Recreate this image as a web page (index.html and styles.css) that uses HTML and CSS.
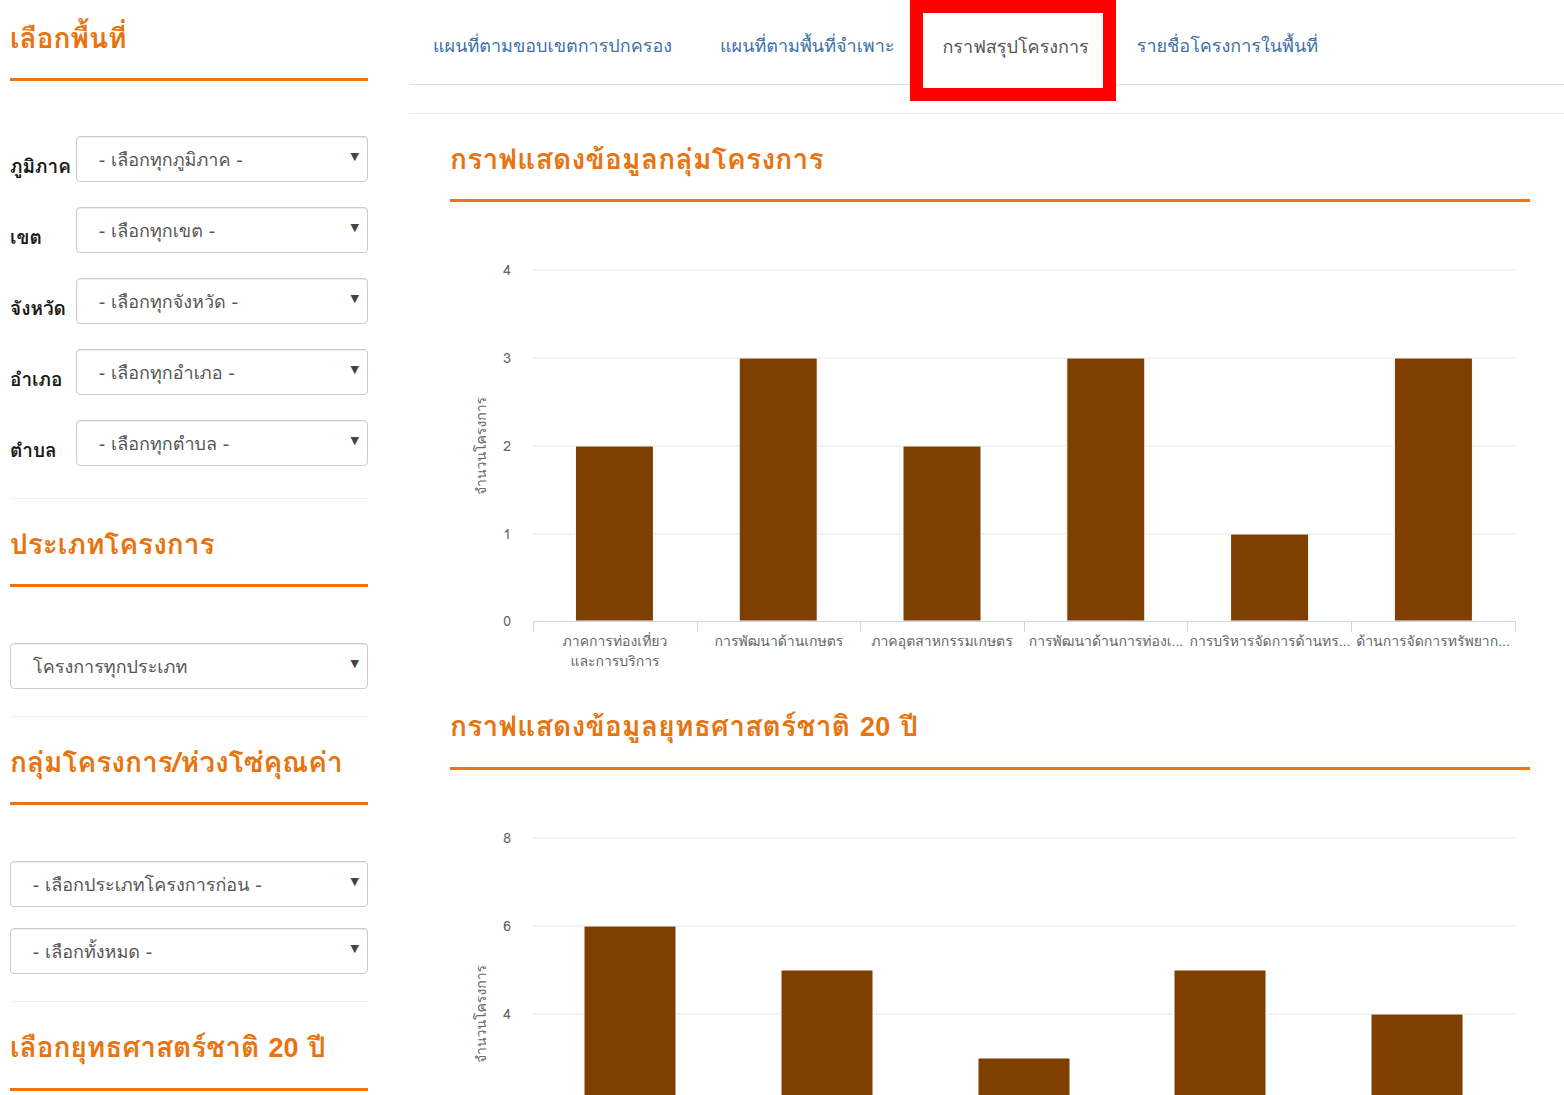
FILE: index.html
```html
<!DOCTYPE html>
<html lang="th">
<head>
<meta charset="utf-8">
<title>กราฟสรุปโครงการ</title>
<link rel="stylesheet" href="styles.css">
</head>
<body>
<div class="page">
  <aside class="sidebar">
    <h2 class="sec-title first">เลือกพื้นที่</h2>
    <div class="form-rows">
      <div class="form-row"><label class="row-label">ภูมิภาค</label><div class="select"><span class="select-text">- เลือกทุกภูมิภาค -</span><span class="caret">▼</span></div></div>
      <div class="form-row"><label class="row-label">เขต</label><div class="select"><span class="select-text">- เลือกทุกเขต -</span><span class="caret">▼</span></div></div>
      <div class="form-row"><label class="row-label">จังหวัด</label><div class="select"><span class="select-text">- เลือกทุกจังหวัด -</span><span class="caret">▼</span></div></div>
      <div class="form-row"><label class="row-label">อำเภอ</label><div class="select"><span class="select-text">- เลือกทุกอำเภอ -</span><span class="caret">▼</span></div></div>
      <div class="form-row"><label class="row-label">ตำบล</label><div class="select"><span class="select-text">- เลือกทุกตำบล -</span><span class="caret">▼</span></div></div>
    </div>
    <hr class="divider">
    <h2 class="sec-title">ประเภทโครงการ</h2>
    <div class="select-stack">
      <div class="select"><span class="select-text">โครงการทุกประเภท</span><span class="caret">▼</span></div>
    </div>
    <hr class="divider">
    <h2 class="sec-title">กลุ่มโครงการ/ห่วงโซ่คุณค่า</h2>
    <div class="select-stack">
      <div class="select"><span class="select-text">- เลือกประเภทโครงการก่อน -</span><span class="caret">▼</span></div>
      <div class="select"><span class="select-text">- เลือกทั้งหมด -</span><span class="caret">▼</span></div>
    </div>
    <hr class="divider">
    <h2 class="sec-title">เลือกยุทธศาสตร์ชาติ <span class="num">20</span> ปี</h2>
  </aside>

  <main class="main">
    <nav class="tabs-wrap">
      <ul class="tabs">
        <li class="tab"><a>แผนที่ตามขอบเขตการปกครอง</a></li>
        <li class="tab"><a>แผนที่ตามพื้นที่จำเพาะ</a></li>
        <li class="tab active"><a>กราฟสรุปโครงการ</a></li>
        <li class="tab"><a>รายชื่อโครงการในพื้นที่</a></li>
      </ul>
      <div class="highlight-box"></div>
    </nav>
    <div class="tab-gap"></div>

    <section class="chart-section">
      <h2 class="sec-title">กราฟแสดงข้อมูลกลุ่มโครงการ</h2>
      <svg class="chart" width="1080" height="479" viewBox="0 0 1080 479">
        <g class="grid">
          <line x1="83" y1="68" x2="1066" y2="68"/>
          <line x1="83" y1="156" x2="1066" y2="156"/>
          <line x1="83" y1="244" x2="1066" y2="244"/>
          <line x1="83" y1="332" x2="1066" y2="332"/>
        </g>
        <g class="ylabels">
          <text x="61" y="73">4</text>
          <text x="61" y="161">3</text>
          <text x="61" y="249">2</text>
          <text x="61" y="337">1</text>
          <text x="61" y="424">0</text>
        </g>
        <text class="ytitle" transform="translate(36 244) rotate(-90)">จำนวนโครงการ</text>
        <g class="bars">
          <rect x="125.4" y="244" width="78" height="175"/>
          <rect x="289.2" y="156" width="78" height="263"/>
          <rect x="453" y="244" width="78" height="175"/>
          <rect x="616.8" y="156" width="78" height="263"/>
          <rect x="780.6" y="332" width="78" height="87"/>
          <rect x="944.4" y="156" width="78" height="263"/>
        </g>
        <g class="axis">
          <line x1="83" y1="419.5" x2="1066" y2="419.5"/>
          <line x1="83.5" y1="419" x2="83.5" y2="430"/>
          <line x1="247.5" y1="419" x2="247.5" y2="430"/>
          <line x1="410.5" y1="419" x2="410.5" y2="430"/>
          <line x1="574.5" y1="419" x2="574.5" y2="430"/>
          <line x1="737.5" y1="419" x2="737.5" y2="430"/>
          <line x1="901.5" y1="419" x2="901.5" y2="430"/>
          <line x1="1065.5" y1="419" x2="1065.5" y2="430"/>
        </g>
        <g class="xlabels">
          <text x="165" y="444">ภาคการท่องเที่ยว</text>
          <text x="165" y="464">และการบริการ</text>
          <text x="329" y="444">การพัฒนาด้านเกษตร</text>
          <text x="492" y="444">ภาคอุตสาหกรรมเกษตร</text>
          <text x="656" y="444">การพัฒนาด้านการท่องเ...</text>
          <text x="820" y="444">การบริหารจัดการด้านทร...</text>
          <text x="983" y="444">ด้านการจัดการทรัพยาก...</text>
        </g>
      </svg>

      <h2 class="sec-title">กราฟแสดงข้อมูลยุทธศาสตร์ชาติ <span class="num">20</span> ปี</h2>
      <svg class="chart" width="1080" height="326" viewBox="0 0 1080 326">
        <g class="grid">
          <line x1="83" y1="68" x2="1066" y2="68"/>
          <line x1="83" y1="156" x2="1066" y2="156"/>
          <line x1="83" y1="244" x2="1066" y2="244"/>
        </g>
        <g class="ylabels">
          <text x="61" y="73">8</text>
          <text x="61" y="161">6</text>
          <text x="61" y="249">4</text>
        </g>
        <text class="ytitle" transform="translate(36 244) rotate(-90)">จำนวนโครงการ</text>
        <g class="bars">
          <rect x="134" y="156" width="92" height="200"/>
          <rect x="331" y="200" width="92" height="156"/>
          <rect x="528" y="288" width="92" height="68"/>
          <rect x="724" y="200" width="92" height="156"/>
          <rect x="921" y="244" width="92" height="112"/>
        </g>
      </svg>
    </section>
  </main>
</div>
</body>
</html>
```

FILE: styles.css
```css
* { box-sizing: border-box; }

html, body {
  margin: 0;
  padding: 0;
  background: #fff;
}

body {
  font-family: Tahoma, Loma, Garuda, Waree, Umpush, "Noto Sans Thai", "Noto Sans", "DejaVu Sans", sans-serif;
  color: #333;
  overflow: hidden;
}

.page {
  display: flex;
  align-items: flex-start;
  padding-left: 10px;
  gap: 42px;
}

/* ---------- sidebar ---------- */
.sidebar {
  width: 358px;
  flex: none;
}

.sec-title {
  margin: 30px 0 0;
  font-size: 28px;
  line-height: 30px;
  font-weight: bold;
  color: #e8740f;
  padding-bottom: 25px;
  border-bottom: 3px solid #ec7512;
  white-space: nowrap;
}

.sec-title .num {
  font-family: "Liberation Sans", Arial, sans-serif;
  font-size: 27px;
}

.sidebar .sec-title.first {
  margin-top: 23px;
}

.form-rows {
  display: flex;
  flex-direction: column;
  gap: 25px;
  margin-top: 55px;
}

.form-row {
  display: flex;
  align-items: flex-end;
}

.form-row .select {
  flex: 1;
}

.row-label {
  width: 66px;
  flex: none;
  font-weight: bold;
  font-size: 19px;
  line-height: 24px;
  color: #1a1a1a;
  padding-bottom: 4px;
  white-space: nowrap;
}

.select {
  height: 46px;
  border: 1px solid #ccc;
  border-radius: 4px;
  box-shadow: inset 0 1px 1px rgba(0,0,0,0.075);
  display: flex;
  align-items: center;
  justify-content: space-between;
  padding: 0 8px 0 22px;
  background: #fff;
}

.select-text {
  font-size: 18px;
  color: #555;
}

.caret {
  font-size: 11px;
  color: #444;
  margin-top: -6px;
}

.divider {
  border: 0;
  border-top: 1px solid #eee;
  margin: 32px 0 0;
}

.select-stack {
  display: flex;
  flex-direction: column;
  gap: 21px;
  margin-top: 56px;
}

.select-stack + .divider {
  margin-top: 27px;
}

/* ---------- main ---------- */
.main {
  flex: 1;
  min-width: 0;
}

.tabs-wrap {
  position: relative;
}

.tabs {
  list-style: none;
  margin: 0;
  padding: 0;
  display: flex;
  border-bottom: 1px solid #ddd;
  height: 85px;
}

.tab {
  margin-right: 2px;
}

.tab a {
  display: flex;
  align-items: center;
  height: 84px;
  padding: 6px 22px 0;
  font-size: 18px;
  color: #3d6fa8;
  border: 1px solid transparent;
  border-bottom: 0;
  border-radius: 4px 4px 0 0;
  white-space: nowrap;
}

.tab.active a {
  color: #555;
  background: #fff;
  border-color: #ddd;
  height: 85px;
}

.highlight-box {
  position: absolute;
  left: 500px;
  top: 0;
  width: 206px;
  height: 101px;
  border: 13px solid #ff0000;
}

.tab-gap {
  height: 29px;
  border-bottom: 1px solid #e8e8e8;
}

.chart-section {
  padding: 0 34px 0 40px;
}

.chart-section .sec-title {
  padding-bottom: 25px;
  letter-spacing: 0.3px;
}

.chart {
  display: block;
  font-family: Tahoma, Loma, Garuda, Waree, Umpush, "Noto Sans Thai", "Noto Sans", "DejaVu Sans", sans-serif;
}

.grid line {
  stroke: #e6e6e6;
  stroke-width: 1;
}

.ylabels text {
  font-size: 14px;
  fill: #666;
  text-anchor: end;
}

.ytitle {
  font-size: 14px;
  fill: #666;
  text-anchor: middle;
}

.bars rect {
  fill: #7f3f00;
  stroke: #fff;
  stroke-width: 1;
}

.axis line {
  stroke: #ccd6eb;
  stroke-width: 1;
}

.xlabels text {
  font-size: 14px;
  fill: #666;
  text-anchor: middle;
}
```
